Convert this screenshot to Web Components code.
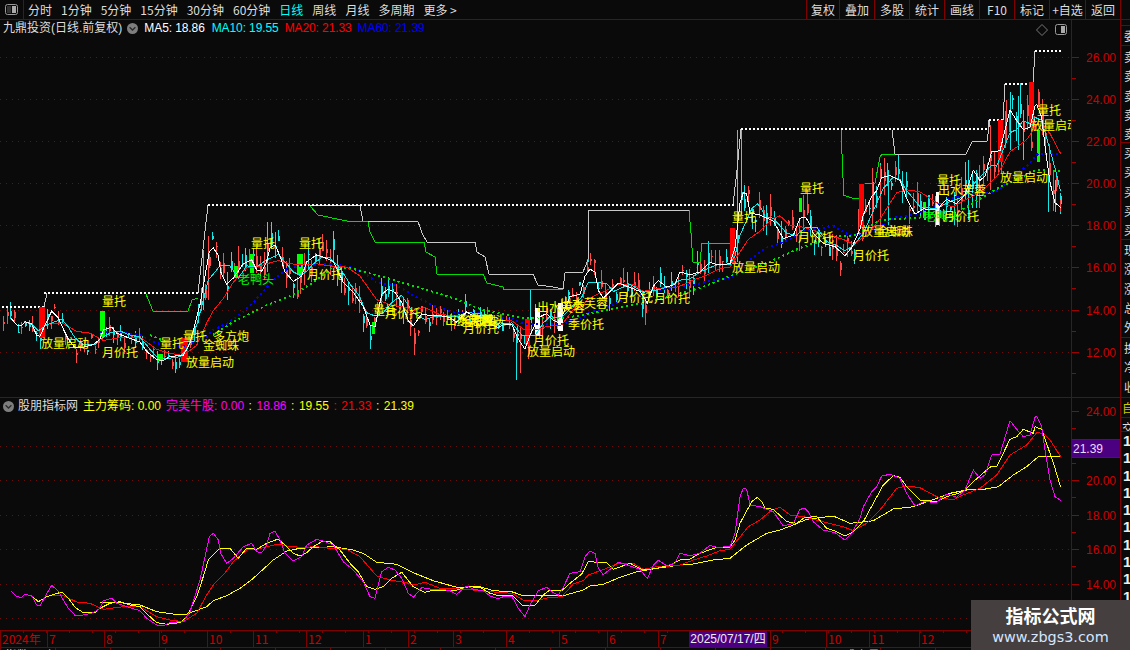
<!DOCTYPE html>
<html lang="zh"><head><meta charset="utf-8"><title>K</title>
<style>
html,body{margin:0;padding:0;background:#0a0a0a;overflow:hidden}
body{font:12px "Liberation Sans","Noto Sans CJK SC",sans-serif;color:#ddd}
</style></head><body>
<kd-app>
  <kd-toolbar>
    <kd-tab>分时</kd-tab><kd-tab>1分钟</kd-tab><kd-tab>5分钟</kd-tab><kd-tab>15分钟</kd-tab><kd-tab>30分钟</kd-tab><kd-tab>60分钟</kd-tab><kd-tab active>日线</kd-tab><kd-tab>周线</kd-tab><kd-tab>月线</kd-tab><kd-tab>多周期</kd-tab><kd-tab>更多 &gt;</kd-tab>
    <kd-btn slot="right" w="33">复权</kd-btn><kd-btn slot="right" w="35">叠加</kd-btn><kd-btn slot="right" w="35">多股</kd-btn><kd-btn slot="right" w="35">统计</kd-btn><kd-btn slot="right" w="35">画线</kd-btn><kd-btn slot="right" w="35">F10</kd-btn><kd-btn slot="right" w="35">标记</kd-btn><kd-btn slot="right" w="36">+自选</kd-btn><kd-btn slot="right" w="36">返回</kd-btn>
  </kd-toolbar>
  <kd-panel kind="main" style="--h:377px">
    <kd-legend slot="legend" icon-pad="3">
      <span style="color:#ddd">九鼎投资(日线.前复权)</span><kd-chevron></kd-chevron>
      <span style="color:#fff;margin-left:6px;letter-spacing:-.1px">MA5: 18.86</span><span style="color:#0ff;margin-left:7px;letter-spacing:-.1px">MA10: 19.55</span><span style="color:#f00;margin-left:6px;letter-spacing:-.1px">MA20: 21.33</span><span style="color:#0000ff;margin-left:6px;letter-spacing:-.1px">MA60: 21.39</span>
    </kd-legend>
    <kd-chart slot="chart" kind="main"></kd-chart>
    <kd-axis slot="axis" kind="main"></kd-axis>
    <kd-strip slot="strip" kind="main"></kd-strip>
  </kd-panel>
  <kd-panel kind="sub" style="--h:233px">
    <kd-legend slot="legend">
      <kd-chevron></kd-chevron><span style="color:#ddd;margin-left:4px">股朋指标网</span>
      <span style="color:#ff0;margin-left:5px">主力筹码: 0.00</span>
      <span style="color:#f0f;margin-left:5px">完美牛股: 0.00</span><span style="color:#ff0;white-space:pre;word-spacing:1.2px"> : </span><span style="color:#f0f">18.86</span><span style="color:#ff0;white-space:pre;word-spacing:1.2px"> : 19.55</span><span style="color:#f00;white-space:pre;word-spacing:1.2px"> : 21.33</span><span style="color:#ff0;white-space:pre;word-spacing:1.2px"> : 21.39</span>
    </kd-legend>
    <kd-chart slot="chart" kind="sub"></kd-chart>
    <kd-axis slot="axis" kind="sub"></kd-axis>
    <kd-strip slot="strip" kind="sub"></kd-strip>
  </kd-panel>
  <kd-timeaxis></kd-timeaxis>
  <kd-footer></kd-footer>
  <kd-watermark></kd-watermark>
</kd-app>
<script>
(function(){
const RED='#800000';
function def(name,css,html,init){
  customElements.define(name,class extends HTMLElement{
    connectedCallback(){
      if(this.shadowRoot)return;
      const r=this.attachShadow({mode:'open'});
      r.innerHTML=`<style>${css}</style>${typeof html==='function'?html(this):html}`;
      if(init)init(this,r);
    }
  });
}
def('kd-app',`:host{display:flex;flex-direction:column;width:1130px;height:650px;position:relative;overflow:hidden;background:#0a0a0a}`,`<slot></slot>`);

def('kd-toolbar',`
 :host{display:flex;height:19px;border-bottom:1px solid ${RED};box-sizing:content-box;flex:none;align-items:stretch;font-family:"Liberation Sans","Noto Sans CJK SC",sans-serif;font-size:12px}
 .ic{width:23px;border-right:1px solid ${RED};display:flex;align-items:center;justify-content:center;box-sizing:content-box}
 .tabs{display:flex;gap:9px;padding-left:4px;flex:1;align-items:center}
 .r{display:flex;margin-right:9px}`,
 `<div class="ic"><svg width="13" height="11" viewBox="0 0 13 11"><rect x=".5" y=".5" width="12" height="10" rx="2" fill="none" stroke="#999"/><rect x="7" y="2" width="4" height="7" fill="#aaa"/><rect x="2" y="2" width="4" height="7" fill="#333"/></svg></div>
  <div class="tabs"><slot></slot></div><div class="r"><slot name="right"></slot></div>`);

def('kd-tab',`:host{display:block;color:#ddd;line-height:19px;white-space:nowrap;font-family:"Noto Sans CJK SC",sans-serif;font-size:12px}
 :host([active]){color:#0ff}`,`<slot></slot>`);
def('kd-btn',`:host{display:block;box-sizing:border-box;border-left:1px solid ${RED};color:#ddd;text-align:center;line-height:19px;font-family:"Noto Sans CJK SC",sans-serif;font-size:12px;white-space:nowrap}
 :host(:last-child){border-right:1px solid ${RED}}`,
 `<slot></slot>`,el=>{el.style.width=el.getAttribute('w')+'px'});

def('kd-panel',`
 :host{display:grid;grid-template-columns:1071px 50px 9px;overflow:hidden;flex:none}
 .left{display:flex;flex-direction:column;position:relative;overflow:hidden}
 ::slotted(kd-axis){border-left:1px solid ${RED};border-right:1px solid ${RED}}
 `,`<div class="left"><slot name="legend"></slot><slot name="chart"></slot></div><slot name="axis"></slot><slot name="strip"></slot>`,
 (el,r)=>{ if(el.getAttribute('kind')==='main'){el.style.borderBottom='1px solid '+RED;el.style.boxSizing='border-box';el.style.height='378px';}
           else {el.style.height='232px';} });

def('kd-legend',`:host{display:flex;align-items:center;height:17px;flex:none;padding-left:3px;font:12px/17px "Liberation Sans","Noto Sans CJK SC",sans-serif;white-space:nowrap;position:relative}
 :host ::slotted(*){flex:none}`,
 `<slot></slot>`);
def('kd-chevron',`:host{display:inline-flex;margin-left:5px;width:11px;height:11px}
 :host(:first-child){margin-left:0}`,
 `<svg width="11" height="11" viewBox="0 0 11 11"><circle cx="5.5" cy="5.5" r="5.5" fill="#7e7e7e"/><path d="M2.6 4.2 5.5 7 8.4 4.2" fill="none" stroke="#2a2a2a" stroke-width="1.3"/></svg>`);

/* ---------- data (traced in panel pixels) ---------- */
const z=(ox,oy,a)=>a.map(p=>[ox+p[0]/3,oy+p[1]/3]);
const join=(a,b,c)=>{const m=z(0,390,a).filter(p=>p[0]<442),n=z(440,500,b).filter(p=>p[0]>=442&&p[0]<680),o=z(680,390,c).filter(p=>p[0]>=680);return m.concat(n,o)};
const MA5=join(
[[33,604],[50,620],[65,622],[75,612],[95,618],[110,645],[120,648],[135,620],[155,586],[175,603],[190,630],[205,655],[225,676],[250,675],[280,668],[300,655],[310,632],[335,625],[350,640],[380,650],[420,662],[440,685],[470,705],[490,708],[510,697],[550,695],[570,665],[600,570],[615,500],[628,440],[640,430],[655,450],[662,490],[680,520],[700,505],[730,470],[755,460],[770,485],[785,488],[800,465],[810,430],[825,424],[840,450],[855,490],[880,513],[905,500],[920,465],[950,448],[975,455],[1000,465],[1030,515],[1060,540],[1090,575],[1110,620],[1125,625],[1145,545],[1165,532],[1185,540],[1205,565],[1225,610],[1240,622],[1265,593],[1290,597],[1320,597]],
[[0,265],[30,272],[50,283],[80,258],[100,268],[130,272],[150,288],[175,296],[195,288],[215,288],[235,325],[255,350],[270,315],[295,272],[320,262],[340,278],[355,285],[370,262],[390,220],[420,215],[435,170],[450,153],[465,160],[475,205],[490,224],[510,208],[535,187],[570,198],[600,208],[622,236],[640,195],[655,181],[680,197],[705,190],[720,162],[739,167]],
[[0,490],[30,497],[60,490],[90,466],[110,472],[150,470],[165,430],[180,320],[190,295],[200,298],[210,345],[240,350],[280,365],[310,408],[340,400],[360,358],[375,355],[385,365],[400,395],[430,420],[465,428],[495,450],[515,430],[540,385],[550,350],[575,305],[590,290],[605,258],[630,253],[660,265],[680,310],[705,348],[730,335],[770,337],[800,312],[830,322],[855,300],[880,240],[900,265],[915,255],[935,195],[960,192],[990,92],[1010,118],[1030,140],[1050,135],[1065,82],[1070,78],[1085,110],[1095,180],[1110,270],[1125,320],[1142,331]]);
const MA10=join(
[[72,612],[95,618],[115,635],[140,620],[185,606],[205,625],[225,652],[250,668],[285,668],[300,655],[330,640],[360,635],[390,645],[420,650],[450,680],[470,698],[500,703],[540,698],[560,680],[590,620],[610,560],[625,510],[640,495],[660,475],[690,475],[715,505],[740,475],[770,478],[800,460],[835,447],[860,470],[880,490],[900,498],[920,488],[940,470],[965,455],[990,455],[1020,480],[1050,520],[1075,545],[1100,590],[1125,598],[1150,590],[1175,565],[1205,547],[1240,590],[1275,607],[1300,600]],
[[0,267],[50,270],[80,260],[120,262],[150,280],[180,288],[215,285],[245,315],[285,316],[310,285],[330,270],[365,272],[390,250],[425,222],[445,185],[500,188],[520,208],[570,190],[610,210],[650,205],[690,195],[739,182]],
[[0,510],[30,507],[60,490],[110,472],[150,472],[165,450],[180,400],[215,335],[232,322],[245,335],[255,355],[280,358],[320,395],[350,400],[375,382],[410,380],[440,415],[470,425],[495,438],[520,425],[550,395],[580,340],[610,285],[640,257],[660,262],[680,290],[720,330],[770,335],[800,320],[850,305],[880,275],[920,240],[935,228],[950,230],[990,148],[1010,140],[1030,118],[1060,130],[1065,110],[1085,118],[1110,190],[1125,235],[1142,292]]);
const MA20=join(
[[150,618],[185,615],[230,636],[270,640],[310,658],[370,650],[420,650],[470,680],[510,690],[550,695],[590,670],[620,615],[640,585],[670,555],[700,515],[740,480],[770,478],[800,470],[835,462],[870,470],[910,472],[950,470],[990,475],[1040,478],[1080,500],[1130,558],[1170,570],[1220,578],[1240,585],[1275,577],[1320,595]],
[[0,268],[80,268],[150,275],[215,280],[250,300],[290,302],[320,294],[365,290],[400,252],[430,242],[445,225],[500,205],[535,190],[580,190],[610,208],[650,200],[710,197],[739,187]],
[[0,525],[40,510],[80,498],[120,482],[150,478],[205,410],[240,390],[275,360],[300,352],[330,375],[370,380],[440,398],[490,410],[520,422],[560,400],[600,360],[650,295],[680,288],[720,293],[770,320],[820,330],[850,315],[900,295],[950,255],[990,195],[1040,165],[1070,128],[1090,130],[1110,150],[1142,200]]);
const MA60=join(
[[300,637],[360,638],[420,645],[470,665],[520,672],[560,672],[620,650],[640,632],[680,617],[720,595],[760,565],[820,510],[860,483],[900,475],[1000,470],[1060,480],[1090,490],[1130,517],[1190,523],[1240,548],[1300,572]],
[[0,250],[50,262],[120,260],[160,272],[215,275],[250,287],[370,287],[430,270],[450,258],[490,253],[540,232],[590,215],[650,205],[700,198],[739,195]],
[[0,525],[40,522],[100,510],[150,505],[200,465],[260,430],[300,420],[340,405],[380,388],[460,378],[510,400],[580,392],[640,357],[700,350],[770,325],[810,310],[870,298],[900,300],[955,290],[1000,255],[1040,230],[1075,200],[1142,200]]);
const toTop=y=>99+(y-411.7)*1.2214;
const upper=a=>a.map(p=>[p[0],toTop(p[1])]);
const GREEN_A=[[150,335],[166,342]];
const GREENDOT=[[213,335],[233,322],[267,305],[293,295],[317,280],[333,267],[350,268],[383,277],[417,287],[450,297],[483,310],[523,318],[563,318],[583,315],[617,308],[650,302],[700,288],[733,275],[767,263],[800,248],[833,237],[857,235],[880,220],[913,218],[953,215],[1000,187],[1037,170],[1062,171]];
const pl=(pts,attrs)=>`<polyline fill="none" points="${pts.map(p=>p[0].toFixed(1)+','+p[1].toFixed(1)).join(' ')}" ${attrs}/>`;
const at=(s,x)=>{for(let i=1;i<s.length;i++){if(x<=s[i][0]){const a=s[i-1],b=s[i];return a[1]+(b[1]-a[1])*(x-a[0])/Math.max(.01,b[0]-a[0]);}}return s[s.length-1][1]};

function candles(){
  let seed=20250717;const rnd=()=>{seed|=0;seed=seed+0x6D2B79F5|0;let t=Math.imul(seed^seed>>>15,1|seed);t=t+Math.imul(t^t>>>7,61|t)^t;return((t^t>>>14)>>>0)/4294967296};
  const vol=x=>x<40?.5:x<200?.55:x<340?1.35:x<420?1.15:x<520?.55:x<700?.95:x<950?1.35:2;
  const s5=upper(MA5);let o='';
  for(let x=3;x<1061;x+=3.67){
    const m=at(s5,Math.max(x,11)),A=5+9*vol(x);
    const c=m+(rnd()-.5)*1.5*A,op=c+(rnd()-.5)*1.4*A;
    const hi=Math.min(c,op)-rnd()*A*.9,lo=Math.max(c,op)+rnd()*A*.9;
    const up=rnd()<.55,col=up?'#ff4a4a':'#15e6e6',X=Math.round(x);
    o+=`<rect x="${X}" y="${hi.toFixed(0)}" width="1" height="${(lo-hi).toFixed(0)}" fill="${col}"/>`;
    o+=`<rect x="${X}" y="${Math.min(c,op).toFixed(0)}" width="2" height="${Math.max(1,Math.abs(c-op)).toFixed(0)}" fill="${col}"/>`;
  }
  const sp=[[208,236,300,'#ff4a4a'],[203,250,310,'#15e6e6'],[267,222,272,'#15e6e6'],[520,340,373,'#ff4a4a'],[516,335,380,'#15e6e6'],[530,290,320,'#15e6e6'],[588,210,262,'#15e6e6'],[737,130,262,'#15e6e6'],[741,130,210,'#15e6e6'],[1010,92,150,'#15e6e6'],[1018,96,150,'#15e6e6'],[1006,100,140,'#ff4a4a'],[1023,110,160,'#15e6e6'],[1048,170,212,'#15e6e6'],[1055,180,212,'#15e6e6'],[1060,200,212,'#ff4a4a'],[880,165,235,'#ff4a4a'],[872,168,230,'#ff4a4a'],[888,170,225,'#15e6e6'],[968,160,220,'#15e6e6'],[990,125,190,'#ff4a4a']];
  for(const [x,a,b,c] of sp)o+=`<rect x="${x}" y="${a}" width="1" height="${b-a}" fill="${c}"/>`;
  return o;
}
const GRID_MAIN=[57,99,141,183,225,267,310,352],GRID_SUB=[446,480,515,549,584,618];
const grid=(ys)=>ys.map(y=>`<line x1="0" x2="1071" y1="${y+.5}" y2="${y+.5}" stroke="#6e0d0d" stroke-dasharray="1 5"/>`).join('');
const lab=(t,x,cy,c='#ff0')=>`<text x="${x}" y="${cy+4.5}" fill="${c}" font-size="12">${t}</text>`;
const LABELS=[
['放量启动',41,343],['量托',102,301],['月价托',102,352],['量托',160,343],['量托',183,336],['多方炮',213,336],['金蜘蛛',203,345],['放量启动',186,362],
['老鸭头',238,279,'#0f0'],['量托',251,243],['量托',299,243],['月价托',307,274],
['量托',373,310],['月价托',385,313],['出水芙蓉',445,320],['多方炮',456,320],['金蜘蛛',462,321],['老鸭头',470,320],['月价托',463,328],
['月价托',533,340],['放量启动',527,351],['出水芙蓉',537,307],['出水芙蓉',560,303],['季价托',568,324],['月价托',617,297],['月价托',654,298],
['量托',732,217],['放量启动',732,267],['量托',800,188],['月价托',798,237],['放量启动',861,231],['金蜘蛛',877,231],['月价托',853,255],
['量托',937,180],['出水芙蓉',938,190],['老鸭头',924,216,'#0f0'],['月价托',943,216],['放量启动',1000,177],['放量启动',1031,125],['量托',1037,110]];
const BARS=[[39,307,6,31,'#f00'],[100,311,5,26,'#0f0'],[158,354,5,7,'#0f0'],[181,338,7,24,'#f00'],[234,266,4,12,'#0f0'],[250,254,4,19,'#0f0'],[297,254,6,20,'#0f0'],
[372,322,3,12,'#0f0'],[525,319,5,26,'#f00'],[535,308,5,27,'#fff'],[558,303,5,28,'#fff'],[730,228,5,35,'#f00'],[799,198,3,14,'#0f0'],[859,184,5,43,'#f00'],[923,202,3,16,'#0f0'],[936,192,3,33,'#fff'],[998,120,5,42,'#f00'],[1037,130,3,32,'#0f0'],[1029,82,5,46,'#f00']];
const STEPS=[
['#00dd00',[[146,294],[153,311],[188,311],[192,300],[198,298]]],
['#c8c8c8',[[310,205],[360,205],[363,221.7],[418,221.7],[422,233],[427,242],[475,242],[477,252],[485,257],[489,274],[533,274],[538,285],[553,287],[563,289],[565,273],[583,272],[588,260],[589,210],[689,210]]],
['#00dd00',[[310,206],[318,215],[350,221.7],[368,221.7],[370,232],[375,242],[424,242],[426,252],[435,257],[437,274],[483,274],[487,283],[503,287],[503,289],[563,289]]],
['#00dd00',[[689,210],[691,233],[693,262],[700,262],[702,243],[730,243]]],
['#c8c8c8',[[892,130],[895,154],[966,154],[972,142],[987,141],[990,120]]],
['#00dd00',[[841,130],[843,178],[843,195],[852,198],[859,198]]],
['#00dd00',[[865,183],[875,183],[880,157],[882,154],[895,154]]]];
const HIGH=[[[2,307],[44,307]],[[44,293],[198,293]],[[208,205],[736,205]],[[741,129],[988,129]],[[989,120],[1003,120]],[[1005,84],[1029,84]],[[1035,51],[1061,51]]];
const RISES=[[[44,307],[47,293]],[[198,293],[208,205]],[[733,205],[737,170],[741,129]],[[988,129],[989,120]],[[1003,120],[1005,84]],[[1029,84],[1033,84],[1035,51]]];

def('kd-chart',`:host{display:block;flex:none}
 svg{display:block;shape-rendering:crispEdges;font-family:"Noto Sans CJK SC",sans-serif}`,
 el=>{
  if(el.getAttribute('kind')==='main'){
    const body=grid(GRID_MAIN)+candles()
      +STEPS.map(s=>pl(s[1],`stroke="${s[0]}"`)).join('')
      +RISES.map(s=>pl(s,`stroke="#c8c8c8"`)).join('')
      +HIGH.map(s=>pl(s,`stroke="#fff" stroke-width="2" stroke-dasharray="2 2"`)).join('')
      +BARS.map(b=>`<rect x="${b[0]}" y="${b[1]}" width="${b[2]}" height="${b[3]}" fill="${b[4]}"/>`).join('')
      +pl(upper(MA60),`stroke="#0000ff" stroke-width="2" stroke-dasharray="2 3"`)
      +pl(GREEN_A,`stroke="#00dd00" stroke-width="2" stroke-dasharray="2 3"`)
      +pl(GREENDOT,`stroke="#00dd00" stroke-width="2" stroke-dasharray="2 3"`)
      +pl(upper(MA20),`stroke="#ff1010"`)+pl(upper(MA10),`stroke="#12e8e8"`)+pl(upper(MA5),`stroke="#fff"`)
      +LABELS.map(l=>lab(l[0],l[1],l[2],l[3])).join('');
    return `<svg width="1071" height="360" viewBox="0 37 1071 360">${body}
      </svg><kd-icons></kd-icons>`;
  }
  return `<svg width="1071" height="215" viewBox="0 415 1071 215">${grid(GRID_SUB)}
    ${pl(MA60,`stroke="#ff0"`)}${pl(MA20,`stroke="#f00"`)}${pl(MA10,`stroke="#ff0"`)}${pl(MA5,`stroke="#f0f"`)}</svg>`;
 });

def('kd-icons',`:host{position:absolute;left:1036px;top:4px;display:flex;gap:7px}`,
 `<svg width="12" height="12" viewBox="0 0 12 12"><path d="M6 .5 11.5 6 6 11.5 .5 6Z" fill="none" stroke="#777"/></svg>
  <svg width="12" height="11" viewBox="0 0 12 11"><rect x=".5" y=".5" width="11" height="10" rx="2" fill="none" stroke="#999"/><rect x="6" y="2" width="4" height="7" fill="#aaa"/></svg>`);

def('kd-axis',`:host{display:block;box-sizing:border-box}
 svg{display:block;font-family:"Liberation Sans",sans-serif;font-size:12px;shape-rendering:crispEdges}`,
 el=>{
  const main=el.getAttribute('kind')==='main';
  const Y0=main?20:398,H=main?377:232;
  const L=main?[[26,57],[24,99],[22,141],[20,183],[18,225],[16,267],[14,310],[12,352]]:[[24,411],[20,480],[18,515],[16,549],[14,584]];
  let ticks='';
  for(const [v,y] of L) ticks+=`<line x1="0" x2="7" y1="${y+.5}" y2="${y+.5}" stroke="#a00000"/><text x="14" y="${y+4.5}" fill="#cc0000">${v}.00</text>`;
  const minors=main?[78,120,162,204,246,288,331,373]:[428,463,497,532,566,601];
  for(const y of minors) ticks+=`<line x1="0" x2="4" y1="${y+.5}" y2="${y+.5}" stroke="#a00000"/>`;
  if(!main) ticks+=`<rect x="0" y="440" width="48" height="17" fill="#4b0082" stroke="none"/><line x1="0" x2="48" y1="439.5" y2="439.5" stroke="#900"/><line x1="0" x2="48" y1="457.5" y2="457.5" stroke="#900"/><text x="1" y="453" fill="#e8dcff">21.39</text>`;
  return `<svg width="48" height="${H}" viewBox="0 ${Y0} 48 ${H}">${ticks}</svg>`;
 });

def('kd-strip',`:host{display:block;width:9px;overflow:hidden;font:12px/19.3px "Noto Sans CJK SC",sans-serif;color:#ddd}
 .blk{border-bottom:1px solid ${RED};box-sizing:border-box;padding-left:3px}
 .r{height:19.3px;white-space:nowrap}
 .n{height:17.3px;font:bold 15px/17.3px "Liberation Sans",sans-serif;color:#eee;padding-left:2px}
 .y{color:#cc0;height:20px;line-height:20px;box-sizing:border-box;border-bottom:1px solid ${RED};padding-left:1px}
 .w{height:14px;line-height:20px;box-sizing:border-box;border-bottom:1px solid ${RED};padding-left:1px;color:#ddd;overflow:hidden}`,
 el=>{
  if(el.getAttribute('kind')==='main'){
    const r=t=>[...t].map(c=>`<div class="r">${c}</div>`).join('');
    return `<div style="height:5px;border-bottom:1px solid ${RED}"></div>
      <div class="blk" style="height:20px">${r('委')}</div>
      <div class="blk" style="height:97px;padding-top:1px">${r('卖卖卖卖卖')}</div>
      <div class="blk" style="height:97px">${r('买买买买买')}</div>
      <div class="blk" style="height:98px">${r('现涨涨总外')}</div>
      <div class="blk" style="height:60px;border:0">${r('换净收')}</div>`;
  }
  return `<div class="y">自</div><div class="w">交</div>`+Array(10).fill('<div class="n">1</div>').join('');
 });

const MONTHS=[['2024年',47],['7',57],['8',55],['9',48],['10',46],['11',53],['12',57],['1',45],['2',45],['3',53],['4',53],['5',48],['6',51],['7',112],['9',56],['10',43],['11',50],['12',211]];
def('kd-timeaxis',`:host{display:flex;position:relative;border-top:1px solid ${RED};border-bottom:1px solid ${RED};box-sizing:border-box;flex:none;height:18px;font:12px/16px "Noto Sans CJK SC",sans-serif;color:#cc0000;background-image:repeating-linear-gradient(90deg,${RED} 0 1px,transparent 1px 23px);background-size:100% 2px;background-repeat:no-repeat}
 .m{box-sizing:border-box;border-left:1px solid ${RED};padding-left:1px;flex:none;white-space:nowrap}
 .m:first-child{border:0;padding-left:2px}
 .date{position:absolute;left:689px;top:0;width:78px;height:16px;background:#4b0082;color:#eee;text-align:center;font:12px/16px "Liberation Sans","Noto Sans CJK SC",sans-serif;white-space:nowrap}`,
 `${MONTHS.map(m=>`<div class="m" style="width:${m[1]}px">${m[0]}</div>`).join('')}<div class="date">2025/07/17/四</div>`);

def('kd-footer',`:host{display:flex;height:5px;overflow:hidden;flex:none;font:12px/14px "Noto Sans CJK SC",sans-serif;color:#ddd;background-image:repeating-linear-gradient(90deg,${RED} 0 1px,transparent 1px 55px);background-size:100% 2px;background-repeat:no-repeat}
 span{flex:none}`,
 `<span style="width:44px;padding-left:5px;box-sizing:border-box">指数</span><span style="width:800px">上</span><span style="color:#0ff">成交量</span>`);

def('kd-watermark',`:host{position:absolute;right:0;bottom:0;width:159px;height:50px;background:#463f3f;text-align:center;display:flex;flex-direction:column;align-items:center}
 .a{font:bold 18px/24px "Noto Sans CJK SC",sans-serif;color:#fff;margin-top:3px}
 .b{font:14.4px/20px "DejaVu Sans",sans-serif;color:#d4e6ff}`,
 `<div class="a">指标公式网</div><div class="b">www.zbgs3.com</div>`);
})();
</script>
</body></html>
